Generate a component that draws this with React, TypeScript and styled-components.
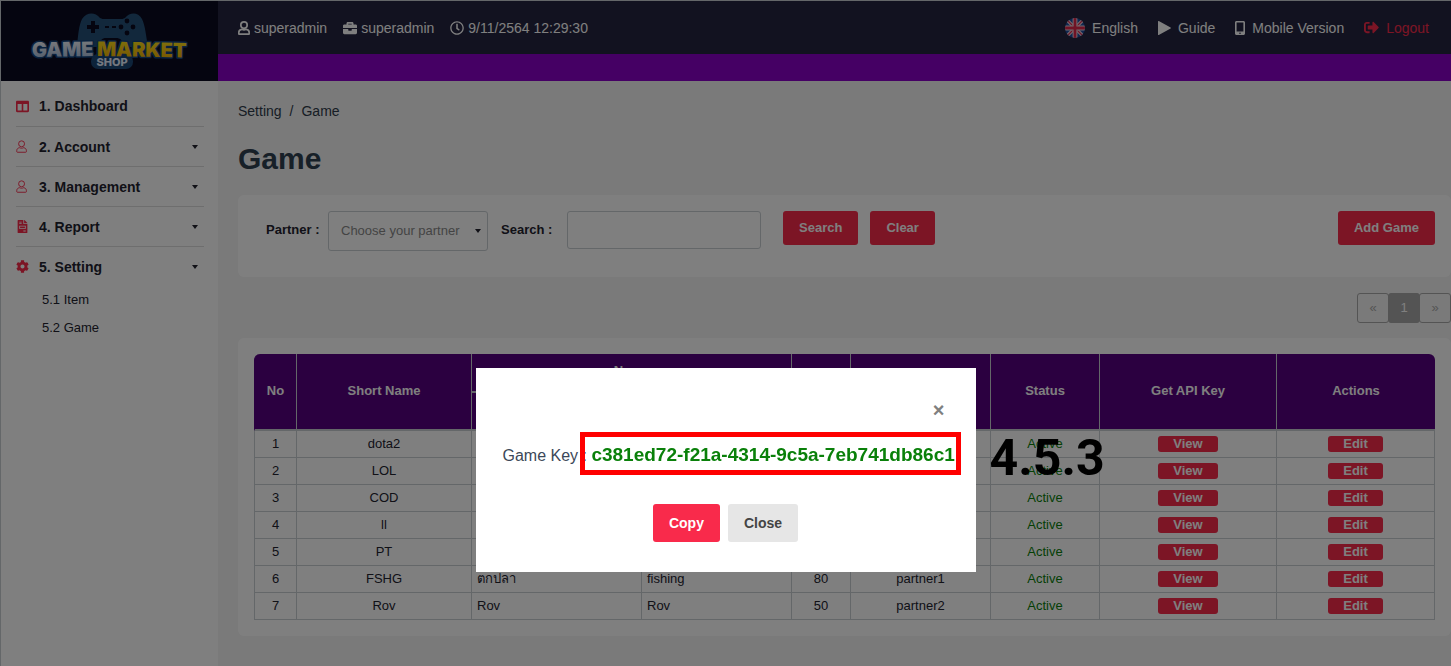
import React, { useState } from "react";
import styled, { createGlobalStyle } from "styled-components";
import {
  FaBriefcase,
  FaRegClock,
  FaSignOutAlt,
  FaColumns,
  FaFileInvoice,
  FaCog,
} from "react-icons/fa";

const red = "#f92a4b";
const ink = "#23232f";
const line = "#c8ced3";

const GlobalStyle = createGlobalStyle`
  * { box-sizing: border-box; }
  body {
    margin: 0;
    background: #f4f4f4;
    color: ${ink};
    font: 13px/20px "Liberation Sans", Arial, sans-serif;
  }
  button, input, select { font: inherit; }
  a { color: inherit; text-decoration: none; }
`;

const Page = styled.div`
  display: grid;
  grid-template-columns: 218px minmax(0, 1fr);
  min-height: 100vh;
  border-top: 1px solid ${line};
`;

const Sidebar = styled.aside`
  background: #fff;
  border-left: 1px solid ${line};
`;

const LogoBox = styled.a`
  display: flex;
  justify-content: center;
  height: 80px;
  background: #0a0a20;
`;

const Nav = styled.nav`
  padding: 5px 14px 0 15px;
`;

const NavItem = styled.a`
  display: flex;
  align-items: center;
  height: 40px;
  font-size: 14px;
  font-weight: bold;

  & + & {
    border-top: 1px solid #dcdcdc;
  }
`;

const NavIcon = styled.span`
  display: flex;
  width: 23px;
  color: ${red};

  svg {
    width: auto;
    height: 13px;
  }
`;

const Caret = styled.svg`
  width: 6px;
  height: 4px;
  margin-left: auto;
  margin-right: 6px;
  fill: currentColor;
`;

const SubItem = styled.a`
  display: block;
  padding: 4px 0 4px 26px;
`;

const TopBar = styled.header`
  display: flex;
  align-items: center;
  justify-content: space-between;
  height: 53px;
  padding: 0 22px 0 20px;
  background: #242440;
  color: #fff;
  font-size: 14px;
`;

const TopGroup = styled.div<{ $gap: number }>`
  display: flex;
  align-items: center;
  gap: ${(p) => p.$gap}px;
`;

const TopInfo = styled.span`
  display: flex;
  align-items: center;
  gap: 4px;
`;

const TopLink = styled.a<{ $danger?: boolean }>`
  display: flex;
  align-items: center;
  gap: 7px;
  color: ${(p) => (p.$danger ? red : "#fff")};
`;

const Strip = styled.div`
  height: 27px;
  background: #8a00c8;
`;

const Content = styled.main`
  padding: 20px 0 29px 20px;
`;

const Breadcrumb = styled.nav`
  display: flex;
  gap: 8px;
  font-size: 14px;
  color: #2f3b4a;
`;

const Title = styled.h1`
  margin: 18px 0 17px;
  color: #2f4050;
  font-size: 30px;
  line-height: 39px;
`;

const Panel = styled.section`
  padding: 16px;
  background: #fff;
  border-radius: 6px;
`;

const Filters = styled.form`
  display: flex;
  align-items: flex-start;
  height: 50px;
  padding-left: 12px;
`;

const Label = styled.label<{ $width: number }>`
  width: ${(p) => p.$width}px;
  line-height: 38px;
  font-weight: bold;
`;

const SelectWrap = styled.div`
  display: flex;
  align-items: center;
  width: 160px;
  margin-right: 13px;
  border: 1px solid ${line};
  border-radius: 3px;
`;

const Select = styled.select`
  flex: 1;
  min-width: 0;
  height: 38px;
  padding: 0 0 0 12px;
  border: 0;
  background: transparent;
  color: #888;
  appearance: none;
`;

const SearchInput = styled.input`
  width: 194px;
  height: 38px;
  margin-right: 22px;
  padding: 0 12px;
  border: 1px solid ${line};
  border-radius: 3px;
  background: #fff;
`;

const Button = styled.button`
  height: 34px;
  margin-right: 12px;
  padding: 0 16px;
  border: 0;
  border-radius: 3px;
  background: ${red};
  color: #fff;
  font-weight: bold;

  &:last-child {
    margin: 0 0 0 auto;
  }
`;

const Pagination = styled.nav`
  display: flex;
  justify-content: flex-end;
  margin: 16px 0 15px;
`;

const PageButton = styled.button<{ $active?: boolean }>`
  width: 32px;
  height: 30px;
  margin-left: -1px;
  padding: 0;
  border: 1px solid #a8a8a8;
  border-radius: 3px;
  background: ${(p) => (p.$active ? "#a8a8a8" : "transparent")};
  color: ${(p) => (p.$active ? "#fff" : "#aaa")};
`;

const Table = styled.table`
  width: 100%;
  table-layout: fixed;
  border-collapse: separate;
  border-spacing: 0;
  text-align: center;
`;

const HeadCell = styled.th`
  padding: 0 0 2px;
  height: 37px;
  background: #560080;
  color: #fff;
  border-left: 1px solid ${line};
  border-bottom: 2px solid ${line};

  &[rowspan] {
    height: 77px;
  }
  tr:first-child > &:first-child {
    border-left-color: #560080;
    border-top-left-radius: 6px;
  }
  tr:first-child > &:last-child {
    border-top-right-radius: 6px;
  }
`;

const Cell = styled.td<{ $left?: boolean; $good?: boolean }>`
  height: 27px;
  padding: 0 5px;
  border-left: 1px solid ${line};
  border-bottom: 1px solid ${line};
  color: ${(p) => (p.$good ? "#0a800a" : "inherit")};
  text-align: ${(p) => (p.$left ? "left" : "center")};

  &:last-child {
    border-right: 1px solid ${line};
  }
`;

const RowButton = styled.button`
  display: block;
  height: 16px;
  margin: 0 auto;
  padding: 0 15px;
  border: 0;
  border-radius: 3px;
  background: ${red};
  color: #fff;
  font-weight: bold;
  line-height: 16px;
`;

const Overlay = styled.div`
  position: fixed;
  inset: 0;
  display: flex;
  justify-content: center;
  align-items: flex-start;
  padding-top: 368px;
  background: rgba(0, 0, 0, 0.5);
`;

const Dialog = styled.div`
  position: relative;
  width: 500px;
  padding: 30px 27px;
  background: #fff;
`;

const CloseIcon = styled.button`
  display: block;
  margin-left: auto;
  padding: 0 4px;
  border: 0;
  background: none;
  color: #808080;
  font-size: 20px;
  font-weight: bold;
  line-height: 24px;
`;

const KeyLine = styled.p`
  margin: 21px 0 36px;
  color: #3c4858;
  font-size: 16px;
  line-height: 24px;
  white-space: nowrap;
`;

const KeyValue = styled.strong`
  position: relative;
  color: #0a800a;
  font-size: 19px;
`;

const KeyFrame = styled.span`
  position: absolute;
  inset: -12px -6px -10px -11px;
  border: 5px solid #f00;
`;

const DialogButtons = styled.div`
  display: flex;
  justify-content: center;
  gap: 8px;
`;

const DialogButton = styled.button<{ $primary?: boolean }>`
  height: 38px;
  padding: 0 16px;
  border: 0;
  border-radius: 3px;
  background: ${(p) => (p.$primary ? red : "#e6e6e6")};
  color: ${(p) => (p.$primary ? "#fff" : "#444")};
  font-size: 14px;
  font-weight: bold;
`;

const StepNumber = styled.span`
  position: absolute;
  top: 60px;
  left: calc(100% + 14px);
  color: #000;
  font: bold 50px/60px Roboto, sans-serif;
`;

const Down = () => (
  <Caret viewBox="0 0 6 4" aria-hidden="true">
    <path d="M0 0h6L3 4z" />
  </Caret>
);

const UserIcon = ({ weight }: { weight: number }) => (
  <svg
    width="12"
    height="14"
    viewBox="0 0 12 14"
    fill="none"
    stroke="currentColor"
    strokeWidth={weight}
    aria-hidden="true"
  >
    <circle cx="6" cy="4.1" r="3.2" />
    <path d="M3.8 8.3C1.8 8.6.8 9.8.8 11.5v1c0 .4.3.7.7.7h9c.4 0 .7-.3.7-.7v-1c0-1.7-1-2.9-3-3.2-1.4.7-3 .7-4.4 0z" />
  </svg>
);

const PlayIcon = () => (
  <svg width="13" height="14" viewBox="0 0 13 14" fill="currentColor" aria-hidden="true">
    <path d="M0 .6C0 .1.4-.1.8.1L12.6 6.5c.4.2.4.8 0 1L.8 13.9c-.4.2-.8 0-.8-.5z" />
  </svg>
);

const MobileIcon = () => (
  <svg width="10" height="14" viewBox="0 0 10 14" aria-hidden="true">
    <path
      fill="currentColor"
      fillRule="evenodd"
      d="M1.5 0h7C9.3 0 10 .7 10 1.5v11c0 .8-.7 1.5-1.5 1.5h-7C.7 14 0 13.3 0 12.5v-11C0 .7.7 0 1.5 0zM1.6 1.5v9h6.8v-9zM5 11.4a.8.8 0 100 1.6.8.8 0 000-1.6z"
    />
  </svg>
);

const Flag = () => (
  <svg width="20" height="20" viewBox="0 0 20 20" aria-hidden="true">
    <clipPath id="disc">
      <circle cx="10" cy="10" r="10" />
    </clipPath>
    <g clipPath="url(#disc)">
      <path fill="#1c4fa0" d="M0 0h20v20H0z" />
      <path stroke="#e8c8d4" strokeWidth="3.4" d="M0 0l20 20M20 0L0 20" />
      <path stroke="#e0264b" strokeWidth="1.2" d="M0 0l20 20M20 0L0 20" />
      <path stroke="#e8d8e0" strokeWidth="4.8" d="M10 0v20M0 10h20" />
      <path stroke="#e0264b" strokeWidth="2.8" d="M10 0v20M0 10h20" />
    </g>
  </svg>
);

const Logo = () => (
  <svg width="164" height="72" viewBox="0 0 164 72" role="img" aria-label="Game Market Shop">
    <defs>
      <linearGradient id="silver" x2="0" y2="1">
        <stop offset="0" stopColor="#fff" />
        <stop offset="1" stopColor="#9db4d6" />
      </linearGradient>
      <linearGradient id="gold" x2="0" y2="1">
        <stop offset="0" stopColor="#ffe81c" />
        <stop offset="1" stopColor="#f0a800" />
      </linearGradient>
    </defs>
    <path
      fill="#255078"
      d="M49 46C50 34 51 24 54 18C59 11 67 11 72 17C74 18 75 18 77 18H92C94 18 95 18 97 17C102 11 110 11 114 18C117 24 118 34 120 46H98C95 39 92 37 88 37H78C74 37 72 39 70 46z"
    />
    <g fill="#0a0a20">
      <path d="M63 20h4v4h4v4h-4v4h-4v-4h-4v-4h4z" />
      <rect x="77" y="25" width="4" height="2" />
      <rect x="84" y="25" width="4" height="2" />
      <circle cx="99" cy="20" r="2.4" />
      <circle cx="93" cy="26" r="2.4" />
      <circle cx="105" cy="26" r="2.4" />
      <circle cx="99" cy="32" r="2.4" />
    </g>
    <rect x="63" y="53" width="42" height="15" rx="7" fill="#1b4674" />
    <g
      fontFamily="Inter, sans-serif"
      fontWeight="900"
      fontSize="20"
      stroke="#14447c"
      strokeWidth="3"
      strokeLinejoin="round"
      paintOrder="stroke"
    >
      <text x="4" y="56" fill="url(#silver)" transform="rotate(-1 4 56)">GAME</text>
      <text x="69" y="55" fill="url(#gold)" transform="rotate(1 69 55)">MARKET</text>
    </g>
    <text
      x="84"
      y="65"
      textAnchor="middle"
      fill="#e8f0ff"
      fontFamily="Inter, sans-serif"
      fontWeight="800"
      fontSize="11"
    >
      SHOP
    </text>
  </svg>
);

const widths = [42, 175, 170, 150, 59, 140, 109, 177, 159];

const games = [
  { short: "dota2", th: "", en: "", order: "", partner: "" },
  { short: "LOL", th: "", en: "", order: "", partner: "" },
  { short: "COD", th: "", en: "", order: "", partner: "" },
  { short: "ll", th: "", en: "", order: "", partner: "" },
  { short: "PT", th: "", en: "", order: "", partner: "" },
  { short: "FSHG", th: "ตกปลา", en: "fishing", order: "80", partner: "partner1" },
  { short: "Rov", th: "Rov", en: "Rov", order: "50", partner: "partner2" },
];

const menu = [
  { label: "1. Dashboard", icon: <FaColumns />, expandable: false },
  { label: "2. Account", icon: <UserIcon weight={1} />, expandable: true },
  { label: "3. Management", icon: <UserIcon weight={1} />, expandable: true },
  { label: "4. Report", icon: <FaFileInvoice />, expandable: true },
  { label: "5. Setting", icon: <FaCog />, expandable: true },
];

export default function App() {
  const [open, setOpen] = useState(true);
  const gameKey = "c381ed72-f21a-4314-9c5a-7eb741db86c1";

  return (
    <>
      <GlobalStyle />
      <Page>
        <Sidebar>
          <LogoBox href="#">
            <Logo />
          </LogoBox>
          <Nav aria-label="Main menu">
            {menu.map((item) => (
              <NavItem key={item.label} href="#">
                <NavIcon>{item.icon}</NavIcon>
                {item.label}
                {item.expandable && <Down />}
              </NavItem>
            ))}
            <SubItem href="#">5.1 Item</SubItem>
            <SubItem href="#">5.2 Game</SubItem>
          </Nav>
        </Sidebar>
        <div>
          <TopBar>
            <TopGroup $gap={16}>
              <TopInfo><UserIcon weight={1.7} /> superadmin</TopInfo>
              <TopInfo><FaBriefcase size={14} /> superadmin</TopInfo>
              <TopInfo><FaRegClock size={14} /> 9/11/2564 12:29:30</TopInfo>
            </TopGroup>
            <TopGroup $gap={20}>
              <TopLink href="#"><Flag /> English</TopLink>
              <TopLink href="#"><PlayIcon /> Guide</TopLink>
              <TopLink href="#"><MobileIcon /> Mobile Version</TopLink>
              <TopLink href="#" $danger><FaSignOutAlt size={15} /> Logout</TopLink>
            </TopGroup>
          </TopBar>
          <Strip />
          <Content>
            <Breadcrumb aria-label="Breadcrumb">
              <a href="#">Setting</a>
              <span>/</span>
              <span>Game</span>
            </Breadcrumb>
            <Title>Game</Title>
            <Panel>
              <Filters onSubmit={(e) => e.preventDefault()}>
                <Label htmlFor="partner" $width={62}>Partner :</Label>
                <SelectWrap>
                  <Select id="partner">
                    <option>Choose your partner</option>
                  </Select>
                  <Down />
                </SelectWrap>
                <Label htmlFor="search" $width={66}>Search :</Label>
                <SearchInput id="search" type="text" />
                <Button type="submit">Search</Button>
                <Button type="reset">Clear</Button>
                <Button type="button">Add Game</Button>
              </Filters>
            </Panel>
            <Pagination aria-label="Pages">
              <PageButton>«</PageButton>
              <PageButton $active>1</PageButton>
              <PageButton>»</PageButton>
            </Pagination>
            <Panel>
              <Table>
                <colgroup>
                  {widths.map((w, i) => (
                    <col key={i} width={w} />
                  ))}
                </colgroup>
                <thead>
                  <tr>
                    <HeadCell rowSpan={2}>No</HeadCell>
                    <HeadCell rowSpan={2}>Short Name</HeadCell>
                    <HeadCell colSpan={2}>Name</HeadCell>
                    <HeadCell rowSpan={2}>Order</HeadCell>
                    <HeadCell rowSpan={2}>Partner</HeadCell>
                    <HeadCell rowSpan={2}>Status</HeadCell>
                    <HeadCell rowSpan={2}>Get API Key</HeadCell>
                    <HeadCell rowSpan={2}>Actions</HeadCell>
                  </tr>
                  <tr>
                    <HeadCell>TH</HeadCell>
                    <HeadCell>EN</HeadCell>
                  </tr>
                </thead>
                <tbody>
                  {games.map((g, i) => (
                    <tr key={g.short}>
                      <Cell>{i + 1}</Cell>
                      <Cell>{g.short}</Cell>
                      <Cell $left>{g.th}</Cell>
                      <Cell $left>{g.en}</Cell>
                      <Cell>{g.order}</Cell>
                      <Cell>{g.partner}</Cell>
                      <Cell $good>Active</Cell>
                      <Cell><RowButton onClick={() => setOpen(true)}>View</RowButton></Cell>
                      <Cell><RowButton>Edit</RowButton></Cell>
                    </tr>
                  ))}
                </tbody>
              </Table>
            </Panel>
          </Content>
        </div>
      </Page>
      {open && (
        <Overlay>
          <Dialog role="dialog" aria-modal="true" aria-label="Game Key">
            <CloseIcon aria-label="Close" onClick={() => setOpen(false)}>×</CloseIcon>
            <KeyLine>
              Game Key : <KeyValue>{gameKey}<KeyFrame /></KeyValue>
            </KeyLine>
            <DialogButtons>
              <DialogButton $primary onClick={() => navigator.clipboard?.writeText(gameKey)}>Copy</DialogButton>
              <DialogButton onClick={() => setOpen(false)}>Close</DialogButton>
            </DialogButtons>
            <StepNumber>4.5.3</StepNumber>
          </Dialog>
        </Overlay>
      )}
    </>
  );
}
